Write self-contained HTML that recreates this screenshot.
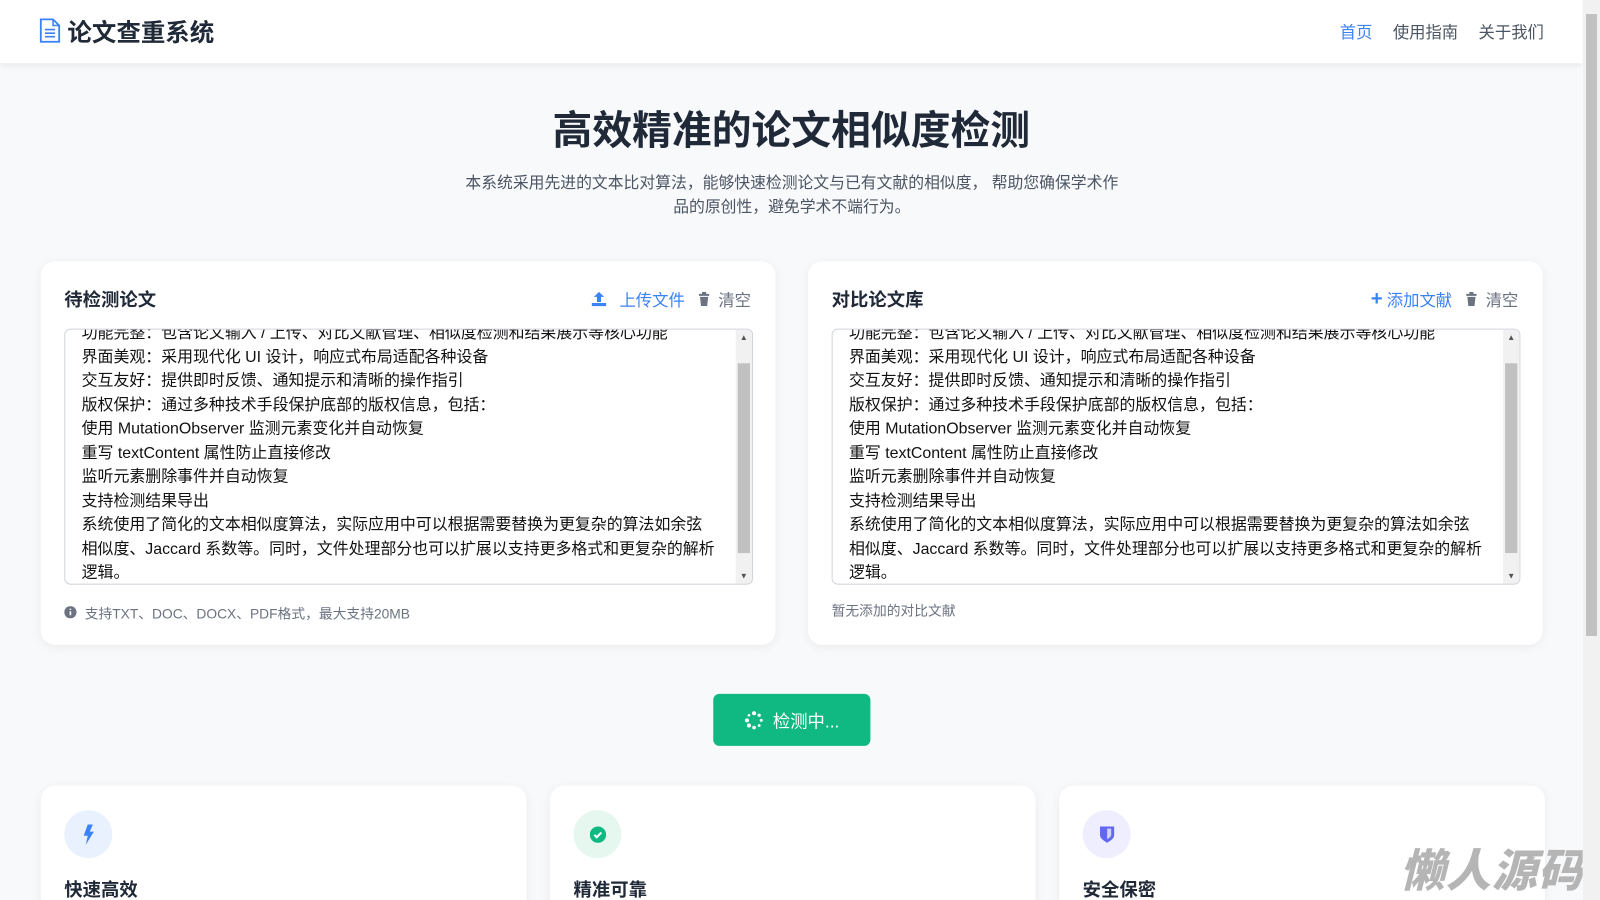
<!DOCTYPE html>
<html><head><meta charset="utf-8"><style>
*{box-sizing:border-box;margin:0;padding:0}
html,body{width:1600px;height:900px;overflow:hidden}
body{background:#f8f9fb;font-family:"Liberation Sans","Noto Sans CJK SC",sans-serif;color:#1f2937;position:relative}
.main{position:absolute;left:0;top:0;width:1551px;height:882px;overflow:hidden;transform:scale(1.0204);transform-origin:0 0}
.sb{position:absolute;left:1583px;top:0;width:17px;height:900px;background:#f1f1f1}
.sb div{position:absolute;left:3px;top:14px;width:11px;height:622px;background:#c1c1c1}
.nav{height:62px;background:#fff;box-shadow:0 2px 6px rgba(0,0,0,.08);position:relative}
.logo{position:absolute;left:38px;top:12px;font-size:24px;font-weight:700;color:#1f2937;display:flex;align-items:center;gap:6px}
.links{position:absolute;right:38px;top:18px;font-size:16px;color:#4b5563}
.links span{margin-left:20px}
h1{position:absolute;top:97px;width:100%;text-align:center;font-size:39px;font-weight:700;color:#1f2937}
.sub{position:absolute;top:168px;left:454px;width:644px;text-align:center;font-size:15.5px;line-height:24px;color:#4b5563}
.card{position:absolute;background:#fff;border-radius:14px;box-shadow:0 2px 10px rgba(0,0,0,.06)}
.ct{position:absolute;left:23px;top:24px;font-size:18px;font-weight:700}
.act{position:absolute;right:24px;top:25px;font-size:16px;color:#6b7280;display:flex;align-items:center;gap:4px}
.act .b{color:#3b82f6}
.ta{position:absolute;left:23px;top:66px;width:675px;height:251px;border:1px solid #d1d5db;border-radius:6px;overflow:hidden}
.ta .tx{position:absolute;left:16px;top:-8px;font-size:15.6px;line-height:23.5px;color:#111;white-space:nowrap}
.ta .s{position:absolute;right:0;top:0;width:16px;height:100%;background:#f1f1f1}
.ta .s div{position:absolute;left:2px;top:33px;width:12px;height:186px;background:#c1c1c1}
.ta .s i{position:absolute;left:4px;font-style:normal;font-size:8px;color:#555}
.note{position:absolute;left:23px;font-size:13.5px;color:#6b7280;display:flex;align-items:center;gap:8px}
.btn{position:absolute;left:699px;top:680px;width:154px;height:51px;background:#10b981;border-radius:6px;color:#fff;font-size:17px;display:flex;align-items:center;justify-content:center;gap:8px}
.f{top:770px;height:140px;width:476px}
.ic{position:absolute;left:23px;top:24px;width:47px;height:47px;border-radius:50%;display:flex;align-items:center;justify-content:center}
.ft{position:absolute;left:23px;top:88px;font-size:18px;font-weight:700}
.wm{position:absolute;left:1372px;top:818px;font-size:44px;font-weight:900;color:#b5b5b5;font-style:italic;letter-spacing:1px;white-space:nowrap}
</style></head><body>
<div class="main">
<div class="nav">
<div class="logo"><svg width="22" height="24" viewBox="0 0 22 24"><path d="M2 1h12l6 6v16H2z" fill="none" stroke="#3b82f6" stroke-width="1.8"/><path d="M14 1v6h6" fill="none" stroke="#3b82f6" stroke-width="1.5"/><path d="M6 11h10M6 14.5h10M6 18h10" stroke="#3b82f6" stroke-width="1.6"/></svg>论文查重系统</div>
<div class="links"><span style="color:#3b82f6">首页</span><span>使用指南</span><span>关于我们</span></div>
</div>
<h1>高效精准的论文相似度检测</h1>
<div class="sub">本系统采用先进的文本比对算法，能够快速检测论文与已有文献的相似度， 帮助您确保学术作品的原创性，避免学术不端行为。</div>

<div class="card" style="left:40px;top:256px;width:720px;height:376px">
<div class="ct">待检测论文</div>
<div class="act"><svg width="16" height="16" viewBox="0 0 16 16"><path d="M8 1l5 5H10v5H6V6H3z M1 12h14v3H1z" fill="#3b82f6"/></svg>&nbsp;<span class="b">上传文件</span>&nbsp;<svg width="12" height="14" viewBox="0 0 12 14"><path d="M1 2h10v2H1zM4 0h4v2H4zM2 5h8l-1 9H3z" fill="#6b7280"/></svg>&nbsp;清空</div>
<div class="ta"><div class="tx">功能完整：包含论文输入 / 上传、对比文献管理、相似度检测和结果展示等核心功能<br>界面美观：采用现代化 UI 设计，响应式布局适配各种设备<br>交互友好：提供即时反馈、通知提示和清晰的操作指引<br>版权保护：通过多种技术手段保护底部的版权信息，包括：<br>使用 MutationObserver 监测元素变化并自动恢复<br>重写 textContent 属性防止直接修改<br>监听元素删除事件并自动恢复<br>支持检测结果导出<br>系统使用了简化的文本相似度算法，实际应用中可以根据需要替换为更复杂的算法如余弦<br>相似度、Jaccard 系数等。同时，文件处理部分也可以扩展以支持更多格式和更复杂的解析<br>逻辑。</div><div class="s"><i style="top:3px">▲</i><div></div><i style="bottom:3px">▼</i></div></div>
<div class="note" style="top:334px"><svg width="12" height="12" viewBox="0 0 12 12"><circle cx="6" cy="6" r="6" fill="#6b7280"/><path d="M6 5v4M6 2.5v1.2" stroke="#fff" stroke-width="1.6"/></svg>支持TXT、DOC、DOCX、PDF格式，最大支持20MB</div>
</div>

<div class="card" style="left:792px;top:256px;width:720px;height:376px">
<div class="ct">对比论文库</div>
<div class="act"><span class="b" style="font-size:20px;font-weight:700">+</span><span class="b">添加文献</span>&nbsp;<svg width="12" height="14" viewBox="0 0 12 14"><path d="M1 2h10v2H1zM4 0h4v2H4zM2 5h8l-1 9H3z" fill="#6b7280"/></svg>&nbsp;清空</div>
<div class="ta"><div class="tx">功能完整：包含论文输入 / 上传、对比文献管理、相似度检测和结果展示等核心功能<br>界面美观：采用现代化 UI 设计，响应式布局适配各种设备<br>交互友好：提供即时反馈、通知提示和清晰的操作指引<br>版权保护：通过多种技术手段保护底部的版权信息，包括：<br>使用 MutationObserver 监测元素变化并自动恢复<br>重写 textContent 属性防止直接修改<br>监听元素删除事件并自动恢复<br>支持检测结果导出<br>系统使用了简化的文本相似度算法，实际应用中可以根据需要替换为更复杂的算法如余弦<br>相似度、Jaccard 系数等。同时，文件处理部分也可以扩展以支持更多格式和更复杂的解析<br>逻辑。</div><div class="s"><i style="top:3px">▲</i><div></div><i style="bottom:3px">▼</i></div></div>
<div class="note" style="top:331px">暂无添加的对比文献</div>
</div>

<div class="btn"><svg width="20" height="20" viewBox="0 0 20 20" fill="#fff"><circle cx="10" cy="3" r="2"/><circle cx="15" cy="5" r="1.6"/><circle cx="17" cy="10" r="1.5"/><circle cx="15" cy="15" r="1.4"/><circle cx="10" cy="17" r="1.8"/><circle cx="5" cy="15" r="2"/><circle cx="3" cy="10" r="2"/><circle cx="5" cy="5" r="1.3"/></svg>检测中...</div>

<div class="card f" style="left:40px"><div class="ic" style="background:#eaf1fe"><svg width="12" height="20" viewBox="0 0 12 20"><path d="M5 0h5L7 7h4L3 20l2-9H1z" fill="#3b82f6"/></svg></div><div class="ft">快速高效</div></div>
<div class="card f" style="left:539px"><div class="ic" style="background:#e6f7f0"><svg width="16" height="16" viewBox="0 0 16 16"><circle cx="8" cy="8" r="8" fill="#10b981"/><path d="M4.5 8.2l2.3 2.3 4.5-4.6" fill="none" stroke="#fff" stroke-width="2"/></svg></div><div class="ft">精准可靠</div></div>
<div class="card f" style="left:1038px"><div class="ic" style="background:#efeefe"><svg width="14" height="17" viewBox="0 0 14 17"><path d="M0 1h14v8c0 4-4 6-7 8-3-2-7-4-7-8z" fill="#6366f1"/><path d="M7 3h4v6c0 2-2 3.5-4 4.5z" fill="#efeefe" opacity=".8"/></svg></div><div class="ft">安全保密</div></div>
<div class="wm">懒人源码</div>
</div>
<div class="sb"><div></div></div>
</body></html>
